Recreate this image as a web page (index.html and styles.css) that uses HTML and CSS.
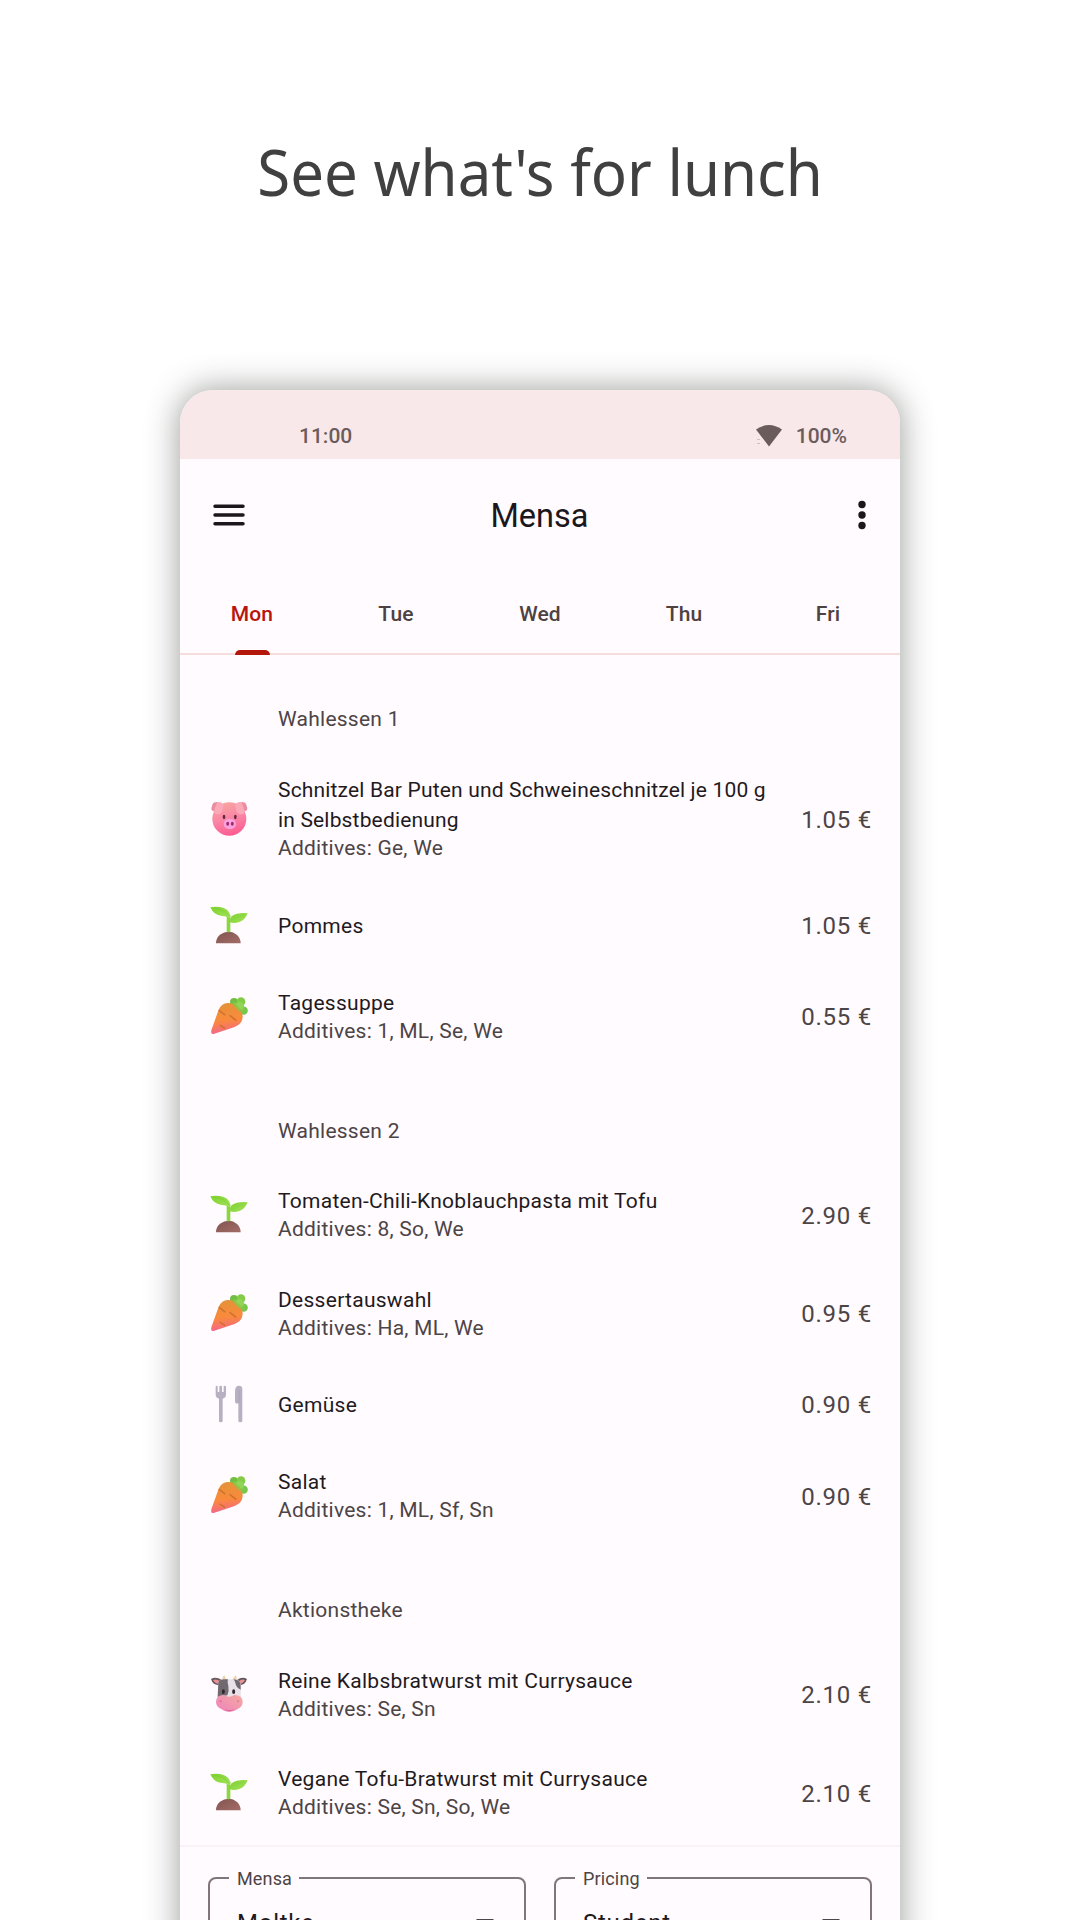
FILE: index.html
```html
<!DOCTYPE html>
<html lang="en">
<head>
<meta charset="utf-8">
<title>Mensa</title>
<link rel="stylesheet" href="styles.css">
</head>
<body>
<svg class="defs" width="0" height="0" aria-hidden="true">
  <defs>
    <linearGradient id="pigFace" x1="0.3" y1="0" x2="0.6" y2="1"><stop offset="0" stop-color="#f7a6a0"/><stop offset=".5" stop-color="#fa85a6"/><stop offset="1" stop-color="#fb5a90"/></linearGradient>
    <linearGradient id="leaf" x1="0" y1="0" x2="1" y2="1"><stop offset="0" stop-color="#7ed22c"/><stop offset="1" stop-color="#a3e25c"/></linearGradient>
    <linearGradient id="soil" x1="0" y1="0" x2="1" y2="1"><stop offset="0" stop-color="#80544f"/><stop offset="1" stop-color="#a56c68"/></linearGradient>
    <linearGradient id="root" x1="0.4" y1="0" x2="0.5" y2="1"><stop offset="0" stop-color="#e39338"/><stop offset=".55" stop-color="#f98a3c"/><stop offset="1" stop-color="#f6648c"/></linearGradient>
    <linearGradient id="muzzle" x1="0" y1="1" x2="1" y2="0"><stop offset="0" stop-color="#ee82bd"/><stop offset="1" stop-color="#f6a9a0"/></linearGradient>
    <symbol id="pig" viewBox="0 0 114 114">
      <ellipse cx="58" cy="60" rx="51" ry="50" fill="url(#pigFace)"/>
      <path d="M22 9Q8 9 7 18L4 28Q4 36 14 38L24 22Z" fill="#e98d9f"/>
      <path d="M22 9Q39 8 40 20L37 34Q34 47 22 46Q11 45 13 34Q16 22 22 9Z" fill="#fba9b9"/>
      <path d="M94 9Q108 9 109 18L112 28Q112 36 102 38L92 22Z" fill="#e98d9f"/>
      <path d="M94 9Q77 8 76 20L79 34Q82 47 94 46Q105 45 103 34Q100 22 94 9Z" fill="#fba9b9"/>
      <ellipse cx="42" cy="54" rx="4" ry="6.500" fill="#64263a"/><ellipse cx="76" cy="54" rx="4" ry="6.500" fill="#64263a"/>
      <rect x="41" y="60" width="37" height="30" rx="15" fill="#fba1dd"/>
      <ellipse cx="53" cy="74" rx="4.500" ry="6" fill="#a12d6c"/><ellipse cx="67" cy="74" rx="4.500" ry="6" fill="#a12d6c"/>
    </symbol>
    <symbol id="sprout" viewBox="0 0 114 114">
      <path d="M18 112Q18 95 30 86Q42 77 56 77Q70 77 81 87Q92 97 92 112Z" fill="url(#soil)"/>
      <path d="M50 77V29H61V77Q56 80 50 77Z" fill="#8cd63f"/>
      <path d="M1 4Q13 1 29 3Q56 6 62 30L59 36Q48 30 32 29Q11 27 1 4Z" fill="url(#leaf)"/>
      <path d="M113 22Q100 19 81 23Q57 28 59 49Q73 53 88 48Q105 43 113 22Z" fill="url(#leaf)"/>
      <path d="M14 8Q42 9 57 31" fill="none" stroke="#78cb38" stroke-width="2"/>
      <path d="M62 44Q76 32 100 29" fill="none" stroke="#86d04c" stroke-width="2"/>
    </symbol>
    <symbol id="carrot" viewBox="0 0 114 114">
      <circle cx="72" cy="15" r="12" fill="#72bd42"/><circle cx="93" cy="14" r="13" fill="#84cc48"/>
      <circle cx="101" cy="41" r="12.500" fill="#79c64d"/>
      <path d="M64 27L72 14L84 21L95 16L97 29L105 39L93 50L82 44Z" fill="#7fc94a"/>
      <circle cx="89" cy="27" r="13" fill="#90d556"/>
      <path d="M4 100L26 38Q37 15 57 18Q74 20 86 34Q103 50 96 70Q92 82 74 90L13 110Q1 114 4 100Z" fill="url(#root)"/>
      <path d="M28 41L44 53M60 56L77 69M31 85L43 93" stroke="#d0722f" stroke-width="5" stroke-linecap="round"/>
      <path d="M76 26L91 41" stroke="#95bf45" stroke-width="7" stroke-linecap="round"/>
    </symbol>
    <symbol id="cutlery" viewBox="0 0 114 114">
      <path d="M17 5Q17 2 20 2T23 5V20Q26 22 28 20V5Q28 2 32 2T36 5V20Q38 22 41 20V5Q41 2 44 2T48 5V28Q48 39 38 41V108Q38 112 32 112T27 108V41Q17 39 17 28Z" fill="#b7b0c2"/>
      <path d="M75 19Q75 2 87 2Q97 2 97 12V107Q97 112 91 112T85 107V55Q75 58 75 47Z" fill="#b7b0c2"/>
      <path d="M87 53V15" stroke="#a7a0b3" stroke-width="2"/>
    </symbol>
    <symbol id="cow" viewBox="0 0 114 114">
      <path d="M40 19Q34 7 43 1Q46 11 52 17Z" fill="#efd2a0"/><path d="M74 19Q84 10 77 1Q70 9 66 17Z" fill="#efd2a0"/>
      <path d="M3 12Q18 4 34 14L31 29Q10 34 3 12Z" fill="#62575f"/><path d="M111 12Q96 4 82 14L85 29Q104 34 111 12Z" fill="#62575f"/>
      <path d="M9 15Q20 10 29 19L28 26Q15 27 9 15Z" fill="#ee908f"/><path d="M105 15Q95 10 87 19L88 26Q99 27 105 15Z" fill="#ee908f"/>
      <path d="M25 23Q28 13 43 13H72Q90 13 92 28L93 76H23Z" fill="#e8e1e9"/>
      <path d="M25 23Q28 13 43 13H54Q51 20 55 32Q58 46 52 61L23 66ZM70 13Q92 13 92 32V44Q79 38 77 27Q76 18 70 13Z" fill="#716970"/>
      <ellipse cx="40" cy="50" rx="4.500" ry="7" fill="#31272f"/><ellipse cx="71" cy="50" rx="4.500" ry="7" fill="#31272f"/>
      <path d="M34 61Q43 59 48 63Q57 68 67 63Q71 59 80 61Q97 64 98 80Q98 95 83 102Q72 111 58 111Q44 111 34 102Q18 95 18 80Q19 64 34 61Z" fill="url(#muzzle)"/>
      <path d="M44 103Q58 109 73 103Q68 108 58 108T44 103Z" fill="#cf5791"/>
      <ellipse cx="32" cy="79" rx="4" ry="3" fill="#df6ea1"/><ellipse cx="84" cy="79" rx="4" ry="3" fill="#e2829b"/>
    </symbol>
  </defs>
</svg>

<h1 class="headline">See what's for lunch</h1>

<main class="phone">
  <div class="status">
    <span class="clock">11:00</span>
    <span class="battery">
      <svg class="wifi" viewBox="0 0 28 24"><path d="M1 5.500Q14-3.500 27 5.500L14 22.500Z" fill="#6b5c5c"/><path d="M2 15.500H5M2 19.500H5" stroke="#d2bfc0"/></svg>
      100%
    </span>
  </div>

  <header class="appbar">
    <svg class="menu" viewBox="0 0 32 22"><path d="M2 2.200H30M2 11H30M2 19.800H30" stroke="#1c171c" stroke-width="3.500" stroke-linecap="round"/></svg>
    <h2 class="title">Mensa</h2>
    <svg class="more" viewBox="0 0 8 30"><g fill="#1c171c"><circle cx="4" cy="4.500" r="3.700"/><circle cx="4" cy="15" r="3.700"/><circle cx="4" cy="25.500" r="3.700"/></g></svg>
  </header>

  <nav class="tabs">
    <span class="tab active">Mon</span><span class="tab">Tue</span><span class="tab">Wed</span><span class="tab">Thu</span><span class="tab">Fri</span>
  </nav>

  <div class="menu-list">
    <section class="line">
      <h3 class="line-name">Wahlessen 1</h3>
      <article class="meal tall"><svg class="emoji"><use href="#pig"/></svg><div class="info"><p class="name">Schnitzel Bar Puten und Schweineschnitzel je 100 g in Selbstbedienung</p><p class="additives">Additives: Ge, We</p></div><span class="price">1.05 €</span></article>
      <article class="meal single"><svg class="emoji"><use href="#sprout"/></svg><div class="info"><p class="name">Pommes</p></div><span class="price">1.05 €</span></article>
      <article class="meal"><svg class="emoji"><use href="#carrot"/></svg><div class="info"><p class="name">Tagessuppe</p><p class="additives">Additives: 1, ML, Se, We</p></div><span class="price">0.55 €</span></article>
    </section>
    <section class="line">
      <h3 class="line-name">Wahlessen 2</h3>
      <article class="meal"><svg class="emoji"><use href="#sprout"/></svg><div class="info"><p class="name">Tomaten-Chili-Knoblauchpasta mit Tofu</p><p class="additives">Additives: 8, So, We</p></div><span class="price">2.90 €</span></article>
      <article class="meal"><svg class="emoji"><use href="#carrot"/></svg><div class="info"><p class="name">Dessertauswahl</p><p class="additives">Additives: Ha, ML, We</p></div><span class="price">0.95 €</span></article>
      <article class="meal single"><svg class="emoji"><use href="#cutlery"/></svg><div class="info"><p class="name">Gemüse</p></div><span class="price">0.90 €</span></article>
      <article class="meal"><svg class="emoji"><use href="#carrot"/></svg><div class="info"><p class="name">Salat</p><p class="additives">Additives: 1, ML, Sf, Sn</p></div><span class="price">0.90 €</span></article>
    </section>
    <section class="line">
      <h3 class="line-name">Aktionstheke</h3>
      <article class="meal"><svg class="emoji"><use href="#cow"/></svg><div class="info"><p class="name">Reine Kalbsbratwurst mit Currysauce</p><p class="additives">Additives: Se, Sn</p></div><span class="price">2.10 €</span></article>
      <article class="meal"><svg class="emoji"><use href="#sprout"/></svg><div class="info"><p class="name">Vegane Tofu-Bratwurst mit Currysauce</p><p class="additives">Additives: Se, Sn, So, We</p></div><span class="price">2.10 €</span></article>
    </section>
  </div>

  <footer class="filters">
    <fieldset class="field"><legend>Mensa</legend><span>Moltke</span><svg class="arrow" viewBox="0 0 18 9"><path d="M0 0H18L9 9Z" fill="#4d4446"/></svg></fieldset>
    <fieldset class="field"><legend>Pricing</legend><span>Student</span><svg class="arrow" viewBox="0 0 18 9"><path d="M0 0H18L9 9Z" fill="#4d4446"/></svg></fieldset>
  </footer>
</main>
</body>
</html>
```
FILE: styles.css
```css
* { box-sizing: border-box; margin: 0; padding: 0; }
html, body { height: 1920px; overflow: hidden; }
body {
  display: flex;
  flex-direction: column;
  align-items: center;
  background: #fff;
  font-family: Roboto, sans-serif;
}
.defs { position: absolute; }

.headline {
  height: 390px;
  flex: none;
  padding-top: 127px;
  font: 400 63px/90px "Noto Sans", sans-serif;
  color: #404040;
  white-space: nowrap;
  transform: scaleX(.952);
}

.phone {
  flex: none;
  width: 720px;
  height: 1600px;
  border-radius: 33px 33px 0 0;
  background: #fffbff;
  box-shadow: 0 0 32px 2px rgba(45, 52, 43, .44);
}

.status {
  display: flex;
  justify-content: space-between;
  height: 69px;
  padding: 31px 53px 0 119px;
  border-radius: 33px 33px 0 0;
  background: #f8e8e9;
  color: #6b5c5c;
  font-size: 21px;
  font-weight: 500;
  line-height: 30px;
}
.battery { display: flex; gap: 13px; }
.wifi { width: 28px; height: 24px; margin-top: 3px; }

.appbar {
  display: grid;
  grid-template-columns: 36px 1fr 36px;
  align-items: center;
  height: 112px;
  padding: 0 34px 0 33px;
}
.menu { width: 32px; height: 22px; }
.more { width: 8px; height: 30px; justify-self: end; }
.title {
  padding-top: 2px;
  text-align: center;
  font-size: 32.500px;
  font-weight: 400;
  color: #1c171c;
}

.tabs {
  display: grid;
  grid-template-columns: repeat(5, 1fr);
  height: 84px;
  border-bottom: 2px solid #f4dddc;
}
.tab {
  position: relative;
  padding-top: 28px;
  text-align: center;
  font-size: 21px;
  font-weight: 500;
  line-height: 30px;
  letter-spacing: .15px;
  color: #4d4142;
}
.tab.active { color: #b9150d; }
.tab.active::after {
  content: "";
  position: absolute;
  left: calc(50% - 17.500px);
  bottom: -2px;
  width: 35px;
  height: 5px;
  border-radius: 5px 5px 0 0;
  background: #b3160a;
}

.menu-list { height: 1192px; border-bottom: 2px solid #f9f3f8; }
.line { padding-top: 28px; }
.line-name {
  height: 72px;
  padding-left: 98px;
  font-size: 21px;
  font-weight: 400;
  line-height: 73px;
  letter-spacing: .25px;
  color: #4d4446;
}
.meal {
  display: grid;
  grid-template-columns: 38px 490px 1fr;
  column-gap: 30px;
  align-items: center;
  height: 98.400px;
  padding: 0 28px 0 30px;
}
.meal.single { height: 84.200px; }
.meal.tall { height: 129px; }
.emoji { width: 38px; height: 38px; margin-top: -3px; }
.info { padding-bottom: 3px; }
.single .info { padding-bottom: 0; }
.name, .additives { font-size: 21px; line-height: 30px; letter-spacing: .28px; }
.name { color: #1f1a1d; }
.tall .name { letter-spacing: .17px; }
.additives { line-height: 26px; letter-spacing: .24px; color: #4d4446; }
.price {
  text-align: right;
  white-space: nowrap;
  font-size: 24px;
  letter-spacing: .75px;
  color: #4d4446;
}

.filters {
  display: grid;
  grid-template-columns: 1fr 1fr;
  gap: 28px;
  padding: 19px 28px 0;
}
.field {
  display: flex;
  justify-content: space-between;
  height: 96px;
  padding: 19px 30px 0 27px;
  border: 2px solid #80757a;
  border-radius: 8px;
  font-size: 24px;
  letter-spacing: .75px;
  color: #1f1a1d;
}
.field legend {
  margin-left: -8px;
  padding: 1px 7px 0 8px;
  font-size: 18px;
  line-height: 23px;
  letter-spacing: .15px;
  color: #4d4446;
}
.arrow { width: 18px; height: 9px; margin-top: 10px; }
```
